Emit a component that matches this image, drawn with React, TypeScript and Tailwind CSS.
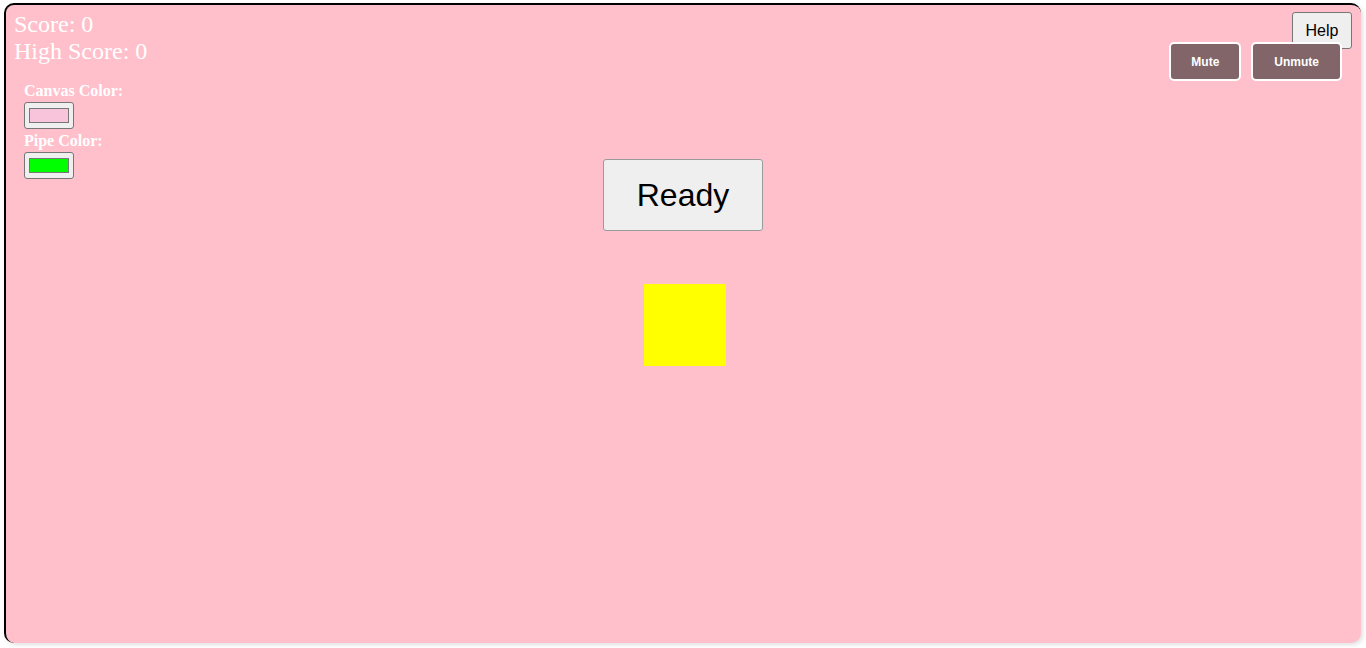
import { useState } from "react";

export default function App() {
  const [canvasColor, setCanvasColor] = useState("#f7c4dc");
  const [pipeColor, setPipeColor] = useState("#00ff00");
  const [score] = useState(0);
  const [highScore] = useState(0);

  return (
    <div className="w-[1366px] h-[648px] bg-white pt-[3px] pl-[4px]">
      {/* game board */}
      <div className="relative w-[1357px] h-[640px] bg-[#ffc0cb] border-t-2 border-l-2 border-black rounded-[10px] shadow-[2px_2px_4px_rgba(0,0,0,0.12)] pl-[8px] pt-[6px] font-['Liberation_Serif',serif] text-white">
        <div className="text-[24px] leading-[27px]">
          <div>Score: {score}</div>
          <div>High Score: {highScore}</div>
        </div>

        {/* colour pickers */}
        <div className="ml-[10px] mt-[17px] flex flex-col items-start">
          <label className="font-bold text-[16px] leading-[18px]">Canvas Color:</label>
          <input
            type="color"
            value={canvasColor}
            onChange={(e) => setCanvasColor(e.target.value)}
            className="mt-[2px] w-[50px] h-[27px] px-[2px] py-[1px] border border-[#767676] bg-[#efefef] rounded-[3px] cursor-pointer"
          />
          <label className="mt-[3px] font-bold text-[16px] leading-[18px]">Pipe Color:</label>
          <input
            type="color"
            value={pipeColor}
            onChange={(e) => setPipeColor(e.target.value)}
            className="mt-[2px] w-[50px] h-[27px] px-[2px] py-[1px] border border-[#767676] bg-[#efefef] rounded-[3px] cursor-pointer"
          />
        </div>

        {/* help + sound buttons sit over the board */}
        <button className="absolute top-[7px] right-[9px] w-[60px] h-[37px] bg-[#efefef] border border-[#767676] rounded-[3px] font-['Liberation_Sans',Arial,sans-serif] text-[16px] text-black">
          Help
        </button>
        <div className="absolute top-[37px] right-[19px] flex gap-[10px] font-['Liberation_Sans',Arial,sans-serif]">
          <button className="h-[39px] px-[20px] bg-[#826569] border-2 border-white rounded-[5px] text-[12px] font-bold text-white">
            Mute
          </button>
          <button className="h-[39px] px-[21px] bg-[#826569] border-2 border-white rounded-[5px] text-[12px] font-bold text-white">
            Unmute
          </button>
        </div>

        {/* start button and the bird */}
        <button className="absolute top-[154px] left-[597px] w-[160px] h-[72px] bg-[#efefef] border border-[#9a9a9a] rounded-[3px] font-['Liberation_Sans',Arial,sans-serif] text-[32px] text-black">
          Ready
        </button>
        <div className="absolute top-[279px] left-[638px] w-[82px] h-[82px] bg-[#ffff00]" />
      </div>
    </div>
  );
}
